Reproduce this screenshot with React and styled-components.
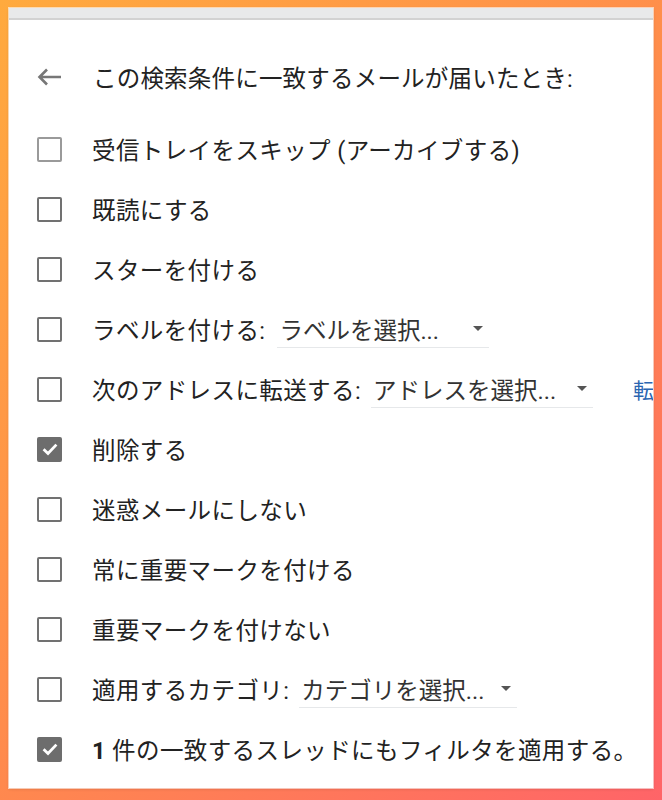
import styled, { createGlobalStyle } from 'styled-components'

const GlobalStyle = createGlobalStyle`
  html, body {
    margin: 0;
    padding: 0;
  }
  body {
    width: 662px;
    height: 800px;
    overflow: hidden;
    background: linear-gradient(135deg, #ffaa3e 0%, #ff8c4c 50%, #ff6468 100%);
    font-family: Roboto, "Noto Sans CJK JP", sans-serif;
  }
`

const Panel = styled.div`
  margin: 8px 9px 0 9px;
  height: 780px;
  background: #fff;
  box-shadow: 0 0 0 1px rgba(255, 255, 255, 0.6), 0 1px 3px rgba(0, 0, 0, 0.15);
  overflow: hidden;
  display: flex;
  flex-direction: column;
`

const TopStrip = styled.div`
  height: 10px;
  background: #e8e9ea;
  border-bottom: 2px solid #d2d2d2;
  flex-shrink: 0;
`

const Content = styled.div`
  padding: 27px 0 0 28px;
  display: flex;
  flex-direction: column;
`

const Header = styled.div`
  height: 60px;
  display: flex;
  align-items: center;
  gap: 31px;
  margin-bottom: 12px;
  font-size: 23.5px;
  letter-spacing: 0.2px;
  color: #222;
  white-space: nowrap;
`

const BackIcon = styled.svg`
  width: 25px;
  height: 18px;
  flex-shrink: 0;
`

const Row = styled.div`
  height: 60px;
  display: flex;
  align-items: center;
  white-space: nowrap;
  font-size: 23.5px;
  color: #222;
  & > * {
    flex-shrink: 0;
  }
`

const Box = styled.div`
  width: 25px;
  height: 25px;
  box-sizing: border-box;
  border-radius: 2px;
  margin-right: 30px;
  border: 2.5px solid ${({ $checked, $light }) => ($checked ? '#6d6d6d' : $light ? '#9a9a9a' : '#717171')};
  background: ${({ $checked }) => ($checked ? '#6d6d6d' : '#fff')};
  display: flex;
  align-items: center;
  justify-content: center;
`

const Label = styled.span`
  letter-spacing: 0.4px;
  & > b {
    font-weight: 700;
  }
`

const Select = styled.div`
  width: ${({ $width }) => $width}px;
  margin-left: ${({ $gap }) => $gap}px;
  height: 38px;
  box-sizing: border-box;
  border-bottom: 1px solid #e6e8ea;
  display: flex;
  align-items: center;
  justify-content: space-between;
  padding: 0 6px 0 2px;
  color: #333;
`

const Caret = styled.span`
  width: 0;
  height: 0;
  margin-left: 8px;
  border-left: 5px solid transparent;
  border-right: 5px solid transparent;
  border-top: 5px solid #555;
`

const Link = styled.span`
  margin-left: 40px;
  color: #2b66b1;
  font-size: 21px;
`

const Check = () => (
  <svg width="18" height="18" viewBox="0 0 18 18">
    <path d="M2.6 9.2 L7 13.4 L15.4 4.6" fill="none" stroke="#fff" strokeWidth="2.8" />
  </svg>
)

const rows = [
  { text: '受信トレイをスキップ (アーカイブする)', light: true },
  { text: '既読にする' },
  { text: 'スターを付ける' },
  { text: 'ラベルを付ける:', select: { value: 'ラベルを選択...', width: 212, gap: 12 } },
  { text: '次のアドレスに転送する:', select: { value: 'アドレスを選択...', width: 222, gap: 10 }, link: '転送先アドレスを追加' },
  { text: '削除する', checked: true },
  { text: '迷惑メールにしない' },
  { text: '常に重要マークを付ける' },
  { text: '重要マークを付けない' },
  { text: '適用するカテゴリ:', select: { value: 'カテゴリを選択...', width: 218, gap: 10 } },
]

const App = () => (
  <>
    <GlobalStyle />
    <Panel>
      <TopStrip />
      <Content>
        <Header>
          <BackIcon viewBox="0 0 25 18">
            <path d="M24 9 H3 M10 1.5 L2.5 9 L10 16.5" fill="none" stroke="#777" strokeWidth="2.6" />
          </BackIcon>
          この検索条件に一致するメールが届いたとき:
        </Header>
        {rows.map((row, index) => (
          <Row key={`row-${index}`}>
            <Box $checked={row.checked} $light={row.light}>
              {row.checked && <Check />}
            </Box>
            <Label>{row.text}</Label>
            {row.select && (
              <Select $width={row.select.width} $gap={row.select.gap}>
                {row.select.value}
                <Caret />
              </Select>
            )}
            {row.link && <Link>{row.link}</Link>}
          </Row>
        ))}
        <Row>
          <Box $checked>
            <Check />
          </Box>
          <Label>
            <b>1</b> 件の一致するスレッドにもフィルタを適用する。
          </Label>
        </Row>
      </Content>
    </Panel>
  </>
)

export default App
